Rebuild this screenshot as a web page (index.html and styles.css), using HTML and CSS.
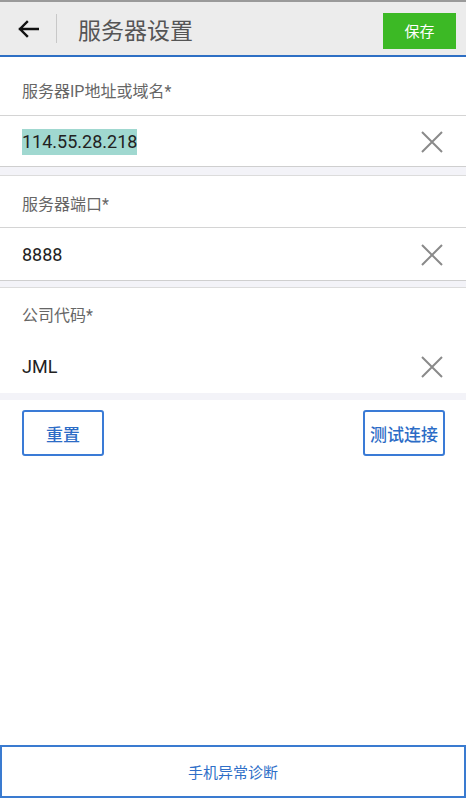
FILE: index.html
```html
<!DOCTYPE html>
<html lang="zh">
<head>
<meta charset="utf-8">
<title>服务器设置</title>
<link rel="stylesheet" href="styles.css">
</head>
<body>
<div class="page">
  <div class="topline"></div>
  <header class="header">
    <div class="back">
      <svg width="22" height="18" viewBox="0 0 22 18"><path d="M21 9H3M10 2L3 9l7 7" fill="none" stroke="#111" stroke-width="2.4" stroke-linecap="square"/></svg>
    </div>
    <div class="divider"></div>
    <h1 class="title">服务器设置</h1>
    <button class="save">保存</button>
  </header>

  <section class="field">
    <div class="label l1 bordered">服务器IP地址或域名*</div>
    <div class="input-row r1"><span class="value selected">114.55.28.218</span><svg class="clear" width="22" height="22" viewBox="0 0 22 22"><path d="M1 1L21 21M21 1L1 21" stroke="#8a8a8a" stroke-width="2"/></svg></div>
  </section>
  <div class="band b1 lined"></div>

  <section class="field">
    <div class="label l2 bordered">服务器端口*</div>
    <div class="input-row r2"><span class="value">8888</span><svg class="clear" width="22" height="22" viewBox="0 0 22 22"><path d="M1 1L21 21M21 1L1 21" stroke="#8a8a8a" stroke-width="2"/></svg></div>
  </section>
  <div class="band lined"></div>

  <section class="field">
    <div class="label l3">公司代码*</div>
    <div class="input-row r3"><span class="value">JML</span><svg class="clear" width="22" height="22" viewBox="0 0 22 22"><path d="M1 1L21 21M21 1L1 21" stroke="#8a8a8a" stroke-width="2"/></svg></div>
  </section>
  <div class="band"></div>

  <div class="actions">
    <button class="outline">重置</button>
    <button class="outline">测试连接</button>
  </div>

  <button class="diag">手机异常诊断</button>
</div>
</body>
</html>
```

FILE: styles.css
```css
* { box-sizing: border-box; }
html, body { margin: 0; padding: 0; background: #fff; }
body { font-family: Roboto, "Noto Sans CJK SC", sans-serif; }
.page { display: flex; flex-direction: column; min-height: 800px; }
.topline { height: 2px; background: #9a9a9a; }
.header {
  height: 55px;
  background: #ececec;
  border-bottom: 2px solid #2e6fc4;
  display: flex;
  align-items: center;
  padding: 0 10px 0 17px;
}
.back { width: 24px; height: 18px; display: flex; align-items: center; }
.divider { width: 1px; height: 29px; background: #c8c8c8; margin-left: 15px; margin-right: 21px; }
.title { margin: 0; font-size: 23px; font-weight: 400; color: #555; flex: 1; }
.save {
  width: 73px; height: 36px;
  border: none; background: #3cb925; color: #fff;
  font-size: 15px; font-family: inherit; padding: 0;
  margin-top: 4px;
}
.label {
  display: flex; align-items: center;
  padding-left: 22px; font-size: 16px; color: #666;
}
.label.l1 { height: 59px; padding-top: 8px; }
.label.l2 { height: 52px; padding-top: 2px; }
.label.l3 { height: 51px; }
.label.bordered { border-bottom: 1px solid #d4d4d4; }
.input-row {
  display: flex; align-items: center; justify-content: space-between;
  padding: 0 23px 0 22px; border-bottom: 1px solid #cfcfcf;
}
.input-row.r1 { height: 51px; padding-top: 2px; }
.input-row.r2 { height: 53px; padding-top: 2px; }
.input-row.r3 { height: 54px; border-bottom: none; padding-top: 2px; }
.value { font-size: 18px; color: #222; line-height: 26px; }
.value.selected { background: #a0d8d0; }
.band { height: 7px; background: #f3f3f8; }
.band.b1 { height: 9px; }
.band.lined { border-bottom: 1px solid #dcdcdc; }
.actions {
  display: flex; justify-content: space-between;
  padding: 10px 21px 0 22px;
}
.outline {
  height: 46px; min-width: 82px; padding: 0 3px;
  background: #fff; border: 2px solid #3a7bd6; border-radius: 3px;
  color: #2c6cc6; font-size: 17px; font-family: inherit; font-weight: 500;
}
.diag {
  margin-top: auto; margin-bottom: 2px;
  height: 53px; width: 100%;
  background: #fff; border: 2px solid #3a7bd0;
  color: #2f6fc8; font-size: 15px; font-family: inherit;
}
```
